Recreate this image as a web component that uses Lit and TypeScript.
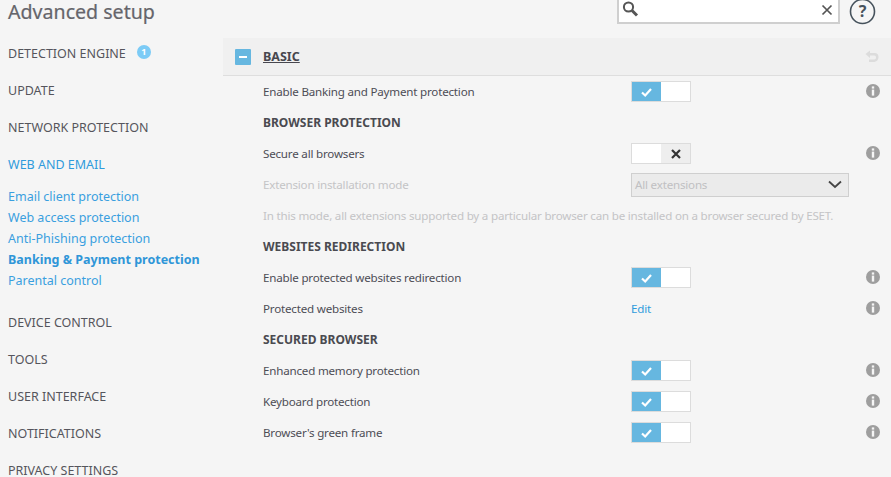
import { LitElement, html, css, svg } from 'lit';
import { customElement } from 'lit/decorators.js';

const check = svg`<path d="M2 6.5 L5.2 9.5 L11 3" fill="none" stroke="#fff" stroke-width="2.2"/>`;

@customElement('app-root')
export class AppRoot extends LitElement {
  static styles = css`
    :host {
      display: block;
      width: 891px;
      height: 477px;
      overflow: hidden;
      background: #f5f5f5;
      color: #4d4d55;
      font-family: "Noto Sans", "Open Sans", sans-serif;
      font-size: 12px;
    }
    .top {
      display: flex;
      height: 38px;
      align-items: flex-start;
    }
    .title {
      font-size: 19.6px;
      line-height: 24px;
      color: #65656b;
      -webkit-text-stroke: 0.2px #65656b;
      padding-left: 8px;
      flex: 1;
    }
    .search {
      box-sizing: border-box;
      width: 223px;
      height: 25px;
      margin-top: -1px;
      background: #fff;
      border: 2px solid #cfcfcf;
      border-top: none;
      display: flex;
      justify-content: space-between;
      align-items: center;
      padding: 0 5px 2px 2px;
    }
    .help {
      margin: -1px 15px 0 9px;
    }
    .body {
      display: flex;
    }
    .side {
      width: 223px;
      padding-left: 8px;
      box-sizing: border-box;
      flex: none;
    }
    .nav {
      height: 37px;
      line-height: 31px;
      font-size: 12.5px;
      color: #55555c;
      display: flex;
      gap: 11px;
    }
    .nav.web { color: #2f9bdc; }
    .badge {
      width: 14px;
      height: 14px;
      margin-top: 7px;
      border-radius: 50%;
      background: #7ccbf6;
      color: #fff;
      font-size: 9px;
      font-weight: 700;
      line-height: 14px;
      text-align: center;
    }
    .subs {
      padding-bottom: 16px;
    }
    .sub {
      height: 21px;
      line-height: 21px;
      color: #3a9fdf;
      font-size: 12.5px;
    }
    .sub.on {
      font-weight: 700;
      color: #2f96d8;
    }
    .main {
      flex: 1;
    }
    .band {
      box-sizing: border-box;
      height: 38px;
      background: #f0f0f0;
      border-bottom: 1px solid #dedede;
      display: flex;
      align-items: center;
      padding: 0 12px 0 12px;
    }
    .minus {
      width: 16px;
      height: 16px;
      border-radius: 1px;
      background: #66b7e0;
      display: grid;
      place-items: center;
      margin-right: 12px;
    }
    .minus i {
      display: block;
      width: 8px;
      height: 2px;
      background: #fff;
    }
    .band b {
      flex: 1;
      text-decoration: underline;
      font-size: 12.5px;
      color: #47474e;
    }
    .row {
      height: 31px;
      display: grid;
      grid-template-columns: 368px 1fr 18px;
      align-items: center;
      padding: 0 11px 0 40px;
      font-size: 11.6px;
      letter-spacing: -0.2px;
    }
    .row h4 {
      margin: 0;
      font-size: 12px;
      letter-spacing: 0;
      font-weight: 700;
      color: #4a4a50;
    }
    .muted { color: #c4c4c6; }
    .note { white-space: nowrap; }
    .info {
      justify-self: end;
      margin-top: -1px;
      display: block;
    }
    .toggle {
      box-sizing: border-box;
      width: 60px;
      height: 21px;
      border: 1px solid #dcdcdc;
      background: #fff;
      display: flex;
    }
    .toggle span {
      width: 29px;
      display: grid;
      place-items: center;
    }
    .toggle .yes { background: #66b7e0; }
    .toggle .no { background: #eeeeee; margin-left: auto; }
    .select {
      box-sizing: border-box;
      width: 218px;
      height: 24px;
      border: 1px solid #cfcfcf;
      background: #ebebeb;
      color: #c0c0c2;
      display: flex;
      align-items: center;
      justify-content: space-between;
      padding: 0 6px 0 3px;
    }
    .link { color: #2f9bdc; }
  `;

  toggle(on: boolean) {
    return on
      ? html`<div class="toggle"><span class="yes"><svg width="13" height="12" viewBox="0 0 13 12">${check}</svg></span></div>`
      : html`<div class="toggle"><span class="no"><svg width="10" height="10" viewBox="0 0 10 10"><path d="M1 1 L9 9 M9 1 L1 9" stroke="#333" stroke-width="2.2"/></svg></span></div>`;
  }

  row(label: string, control: unknown) {
    return html`<div class="row">
      <span>${label}</span><div>${control}</div>
      <svg class="info" width="14" height="14" viewBox="0 0 14 14">
        <circle cx="7" cy="7" r="7" fill="#9e9e9e"/>
        <rect x="5.8" y="2.4" width="2.4" height="2.2" fill="#f5f5f5"/>
        <rect x="5.8" y="5.6" width="2.4" height="6" fill="#f5f5f5"/>
      </svg>
    </div>`;
  }

  heading(label: string) {
    return html`<div class="row"><h4>${label}</h4></div>`;
  }

  render() {
    return html`
      <div class="top">
        <div class="title">Advanced setup</div>
        <div class="search">
          <svg width="20" height="20" viewBox="0 0 20 20">
            <circle cx="7.5" cy="7" r="4.6" fill="none" stroke="#555" stroke-width="2"/>
            <path d="M11 10.5 L16 15.5" stroke="#555" stroke-width="3"/>
          </svg>
          <svg width="12" height="12" viewBox="0 0 12 12"><path d="M1.5 1.5 L10.5 10.5 M10.5 1.5 L1.5 10.5" stroke="#555" stroke-width="1.7"/></svg>
        </div>
        <svg class="help" width="27" height="27" viewBox="0 0 27 27">
          <circle cx="13.5" cy="12.5" r="12" fill="none" stroke="#46525c" stroke-width="1.6"/>
          <text x="13.5" y="18" text-anchor="middle" font-size="16" font-weight="700" fill="#46525c">?</text>
        </svg>
      </div>
      <div class="body">
        <div class="side">
          <div class="nav">DETECTION ENGINE <span class="badge">1</span></div>
          <div class="nav">UPDATE</div>
          <div class="nav">NETWORK PROTECTION</div>
          <div class="nav web">WEB AND EMAIL</div>
          <div class="subs">
            <div class="sub">Email client protection</div>
            <div class="sub">Web access protection</div>
            <div class="sub">Anti-Phishing protection</div>
            <div class="sub on">Banking &amp; Payment protection</div>
            <div class="sub">Parental control</div>
          </div>
          <div class="nav">DEVICE CONTROL</div>
          <div class="nav">TOOLS</div>
          <div class="nav">USER INTERFACE</div>
          <div class="nav">NOTIFICATIONS</div>
          <div class="nav">PRIVACY SETTINGS</div>
        </div>
        <div class="main">
          <div class="band">
            <div class="minus"><i></i></div>
            <b>BASIC</b>
            <svg width="14" height="13" viewBox="0 0 14 13"><path d="M0.5 4 L5 0.5 V3 H9.5 Q13.5 3 13.5 7 T9.5 12 H4 V9.5 H9.5 Q11 9.5 11 7.5 T9.5 5.5 H5 V8 Z" fill="#dcdcdc"/></svg>
          </div>
          ${this.row('Enable Banking and Payment protection', this.toggle(true))}
          ${this.heading('BROWSER PROTECTION')}
          ${this.row('Secure all browsers', this.toggle(false))}
          <div class="row muted">
            <span>Extension installation mode</span>
            <div class="select">All extensions
              <svg width="14" height="9" viewBox="0 0 14 9"><path d="M1 1.5 L7 7 L13 1.5" fill="none" stroke="#444" stroke-width="1.8"/></svg>
            </div>
          </div>
          <div class="row muted note"><span>In this mode, all extensions supported by a particular browser can be installed on a browser secured by ESET.</span></div>
          ${this.heading('WEBSITES REDIRECTION')}
          ${this.row('Enable protected websites redirection', this.toggle(true))}
          ${this.row('Protected websites', html`<span class="link">Edit</span>`)}
          ${this.heading('SECURED BROWSER')}
          ${this.row('Enhanced memory protection', this.toggle(true))}
          ${this.row('Keyboard protection', this.toggle(true))}
          ${this.row("Browser's green frame", this.toggle(true))}
        </div>
      </div>
    `;
  }
}
